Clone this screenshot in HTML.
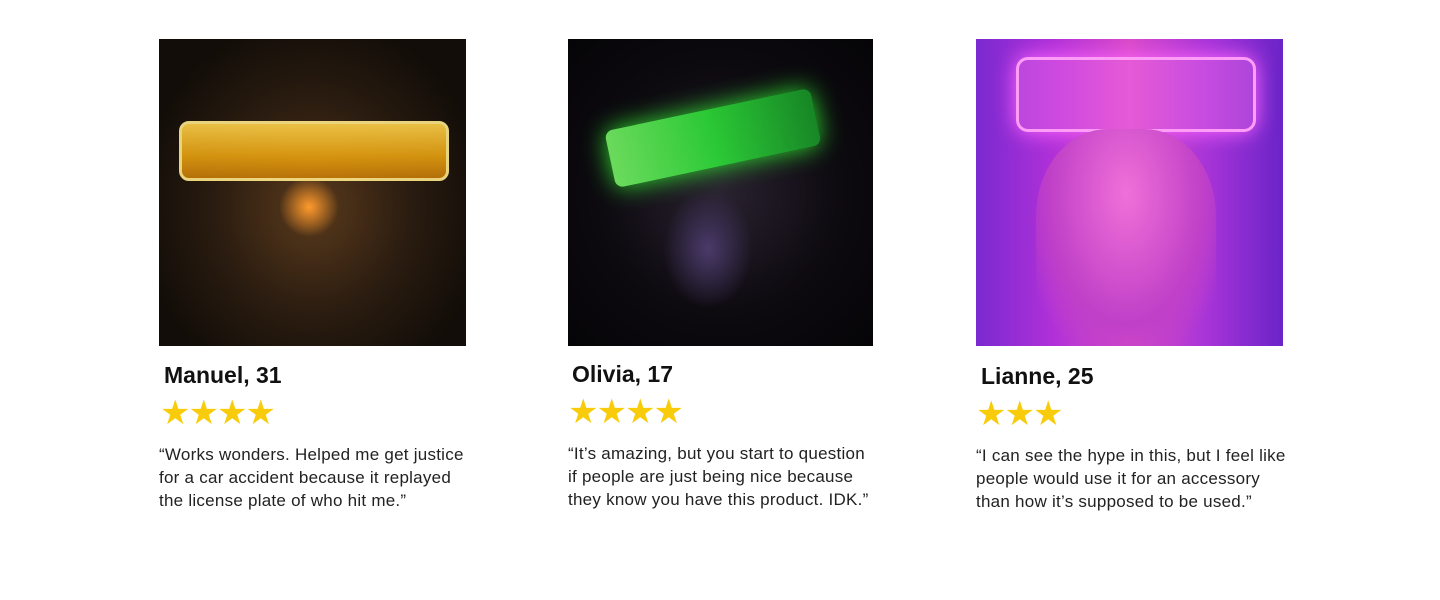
<!DOCTYPE html>
<html><head><meta charset="utf-8"><style>
*{margin:0;padding:0;box-sizing:border-box}
body{width:1440px;height:600px;background:#fff;position:relative;overflow:hidden;font-family:"Liberation Sans",Arial,sans-serif;color:#222}
.ph{position:absolute;top:39px;width:307px;height:307px;overflow:hidden}
.g{position:absolute}
.name{position:absolute;font-size:23px;font-weight:bold;color:#111}
.stars{position:absolute;font-size:34px;color:#f8cc0a;letter-spacing:-2px;line-height:1}
.t{position:absolute;font-size:17px;line-height:23px;color:#222;white-space:nowrap;letter-spacing:0.25px}
</style></head><body>
<div class="ph" style="left:159px;background:radial-gradient(ellipse at 50% 55%,#5a3a1c 0%,#2a1c10 45%,#120d08 80%)">
 <div class="g" style="left:20px;top:82px;width:270px;height:60px;border-radius:10px;background:linear-gradient(180deg,#ffd24a,#e6a010 60%,#c47a08);opacity:.9;border:3px solid #ffe98a"></div>
 <div class="g" style="left:120px;top:138px;width:60px;height:60px;border-radius:50%;background:radial-gradient(#ff9a2c,transparent 70%)"></div>
</div>
<div class="ph" style="left:568px;width:305px;background:radial-gradient(ellipse at 50% 50%,#2a2230 0%,#0d0a10 55%,#050406 100%)">
 <div class="g" style="left:40px;top:70px;width:210px;height:58px;background:linear-gradient(90deg,#7cff6a,#2ee83a 50%,#1a9c2a);transform:rotate(-12deg);border-radius:8px;opacity:.85;box-shadow:0 0 25px #3f3"></div>
 <div class="g" style="left:95px;top:150px;width:90px;height:120px;border-radius:45%;background:radial-gradient(#4a3a6a,transparent 70%)"></div>
</div>
<div class="ph" style="left:976px;background:linear-gradient(90deg,#7a2ad0 0%,#b030d8 25%,#d84ac8 50%,#a834d8 75%,#6a24c8 100%)">
 <div class="g" style="left:40px;top:18px;width:240px;height:75px;border-radius:12px;border:3px solid #ff9cf8;background:rgba(255,120,240,.35);box-shadow:0 0 20px #f6f"></div>
 <div class="g" style="left:60px;top:90px;width:180px;height:217px;border-radius:40% 40% 10% 10%;background:radial-gradient(ellipse at 50% 30%,#f070d8,#c040c8 60%,transparent 85%)"></div>
</div>
<div class="name" style="left:164px;top:362px">Manuel, 31</div>
<div class="stars" style="left:160px;top:396px">★★★★</div>
<div class="t" style="left:159px;top:443px">“Works wonders. Helped me get justice<br>for a car accident because it replayed<br>the license plate of who hit me.”</div>
<div class="name" style="left:572px;top:361px">Olivia, 17</div>
<div class="stars" style="left:568px;top:395px">★★★★</div>
<div class="t" style="left:568px;top:442px">“It’s amazing, but you start to question<br>if people are just being nice because<br>they know you have this product. IDK.”</div>
<div class="name" style="left:981px;top:363px">Lianne, 25</div>
<div class="stars" style="left:976px;top:397px">★★★</div>
<div class="t" style="left:976px;top:444px">“I can see the hype in this, but I feel like<br>people would use it for an accessory<br>than how it’s supposed to be used.”</div>
</body></html>
